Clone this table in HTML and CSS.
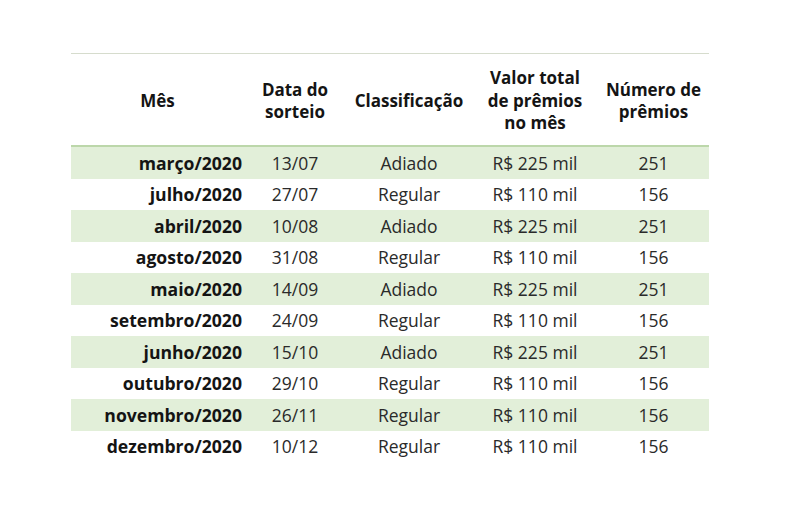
FILE: index.html
```html
<!DOCTYPE html>
<html lang="pt-BR">
<head>
<meta charset="utf-8">
<title>Sorteios 2020</title>
<link rel="stylesheet" href="styles.css">
</head>
<body>
<div class="wrap">
<table class="tbl">
  <colgroup>
    <col class="c1"><col class="c2"><col class="c3"><col class="c4"><col class="c5">
  </colgroup>
  <thead>
    <tr>
      <th>Mês</th>
      <th>Data do<br>sorteio</th>
      <th>Classificação</th>
      <th>Valor total<br>de prêmios<br>no mês</th>
      <th>Número de<br>prêmios</th>
    </tr>
  </thead>
  <tbody>
    <tr class="g first"><td>março/2020</td><td>13/07</td><td>Adiado</td><td>R$ 225 mil</td><td>251</td></tr>
    <tr><td>julho/2020</td><td>27/07</td><td>Regular</td><td>R$ 110 mil</td><td>156</td></tr>
    <tr class="g"><td>abril/2020</td><td>10/08</td><td>Adiado</td><td>R$ 225 mil</td><td>251</td></tr>
    <tr><td>agosto/2020</td><td>31/08</td><td>Regular</td><td>R$ 110 mil</td><td>156</td></tr>
    <tr class="g"><td>maio/2020</td><td>14/09</td><td>Adiado</td><td>R$ 225 mil</td><td>251</td></tr>
    <tr><td>setembro/2020</td><td>24/09</td><td>Regular</td><td>R$ 110 mil</td><td>156</td></tr>
    <tr class="g"><td>junho/2020</td><td>15/10</td><td>Adiado</td><td>R$ 225 mil</td><td>251</td></tr>
    <tr><td>outubro/2020</td><td>29/10</td><td>Regular</td><td>R$ 110 mil</td><td>156</td></tr>
    <tr class="g"><td>novembro/2020</td><td>26/11</td><td>Regular</td><td>R$ 110 mil</td><td>156</td></tr>
    <tr><td>dezembro/2020</td><td>10/12</td><td>Regular</td><td>R$ 110 mil</td><td>156</td></tr>
  </tbody>
</table>
</div>
</body>
</html>
```
FILE: styles.css
```css
html, body {
  margin: 0;
  padding: 0;
  background: #ffffff;
}
body {
  font-family: "Open Sans", "Noto Sans", sans-serif;
  color: #141414;
}
.wrap {
  padding: 53px 0 0 71px;
}
.tbl {
  border-collapse: collapse;
  table-layout: fixed;
  width: 638px;
  border-top: 1px solid #d6dccd;
}
.c1 { width: 173px; }
.c2 { width: 102px; }
.c3 { width: 126px; }
.c4 { width: 126px; }
.c5 { width: 111px; }
.tbl th {
  font-size: 17px;
  font-weight: 700;
  line-height: 22.5px;
  height: 88px;
  padding: 3px 0 0;
  text-align: center;
  vertical-align: middle;
}
.tbl td {
  font-size: 17.5px;
  font-weight: 400;
  color: #2a2a2a;
  height: 31.5px;
  padding: 0;
  text-align: center;
  vertical-align: middle;
  line-height: 22px;
}
.tbl td:first-child {
  text-align: right;
  font-weight: 700;
  color: #141414;
  font-size: 17.6px;
  padding-right: 2px;
}
.tbl tr.g td {
  background: #e2efd9;
}
.tbl tr.first td {
  border-top: 2px solid #bcd7aa;
}
```
